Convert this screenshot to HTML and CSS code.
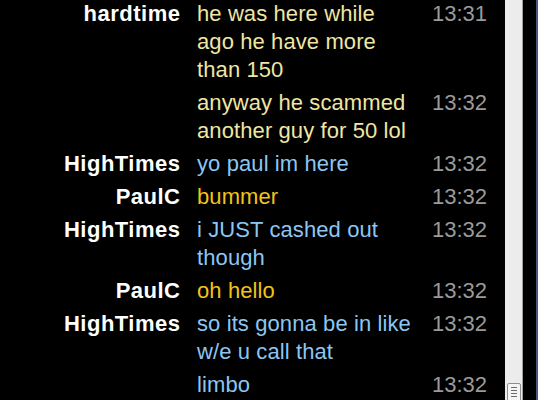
FILE: index.html
```html
<!DOCTYPE html>
<html lang="en">
<head>
    <meta charset="UTF-8">
    <meta name="viewport" content="width=device-width, initial-scale=1.0">
    <title>Chat</title>
    <link rel="stylesheet" href="styles.css">
</head>
<body>

    <div class="fereastra">

        <div class="chat">
            <div class="rand">
                <div class="nume">hardtime</div>
                <div class="mesaj galben-pal">he was here while ago he have more than 150</div>
                <div class="ora">13:31</div>
            </div>
            <div class="rand">
                <div class="nume"></div>
                <div class="mesaj galben-pal">anyway he scammed another guy for 50 lol</div>
                <div class="ora">13:32</div>
            </div>
            <div class="rand">
                <div class="nume">HighTimes</div>
                <div class="mesaj albastru">yo paul im here</div>
                <div class="ora">13:32</div>
            </div>
            <div class="rand">
                <div class="nume">PaulC</div>
                <div class="mesaj auriu">bummer</div>
                <div class="ora">13:32</div>
            </div>
            <div class="rand">
                <div class="nume">HighTimes</div>
                <div class="mesaj albastru">i JUST cashed out though</div>
                <div class="ora">13:32</div>
            </div>
            <div class="rand">
                <div class="nume">PaulC</div>
                <div class="mesaj auriu">oh hello</div>
                <div class="ora">13:32</div>
            </div>
            <div class="rand">
                <div class="nume">HighTimes</div>
                <div class="mesaj albastru">so its gonna be in like w/e u call that</div>
                <div class="ora">13:32</div>
            </div>
            <div class="rand">
                <div class="nume"></div>
                <div class="mesaj albastru">limbo</div>
                <div class="ora">13:32</div>
            </div>
        </div>

        <div class="bara-derulare">
            <div class="cursor-bara">
                <span></span>
                <span></span>
                <span></span>
                <span></span>
            </div>
        </div>

        <div class="margine-neagra"></div>
        <div class="margine-alba"></div>

    </div>

</body>
</html>
```

FILE: styles.css
```css
*, *::before, *::after {
    margin: 0;
    padding: 0;
    box-sizing: border-box;
}

body {
    width: 555px;
    height: 400px;
    overflow: hidden;
    background-color: white;
    font-family: "Liberation Sans", Arial, sans-serif;
}

.fereastra {
    display: flex;
    height: 400px;
}

.chat {
    width: 505px;
    height: 400px;
    overflow: hidden;
    background-color: black;
    display: flex;
    flex-direction: column;
    gap: 5px;
    font-size: 22px;
    line-height: 28px;
}

.rand {
    display: grid;
    grid-template-columns: 180px 218px auto;
    column-gap: 17px;
}

.nume {
    text-align: right;
    font-weight: bold;
    letter-spacing: 0.5px;
    margin-right: -0.5px;
    color: white;
}

.mesaj {
    letter-spacing: 0.1px;
}

.galben-pal {
    color: #efe6a4;
}

.auriu {
    color: #f2c31b;
}

.albastru {
    color: #8cc6f2;
}

.ora {
    color: #9a9a9a;
}

.bara-derulare {
    width: 18px;
    background-color: #ececec;
    border-right: 1px solid #a0a0a0;
    display: flex;
    flex-direction: column;
    justify-content: flex-end;
    padding: 0 1px 0 2px;
}

.cursor-bara {
    height: 22px;
    margin-bottom: -5px;
    border: 1px solid #8e8e8e;
    border-radius: 2px;
    background-color: #f4f4f4;
    display: flex;
    flex-direction: column;
    gap: 2px;
    padding: 3px 3px;
}

.cursor-bara span {
    display: block;
    height: 1px;
    background-color: #6a6a6a;
}

.margine-neagra {
    width: 15px;
    background-color: black;
    border-right: 2px solid #4b587e;
}

.margine-alba {
    flex: 1;
    background-color: white;
}
```
